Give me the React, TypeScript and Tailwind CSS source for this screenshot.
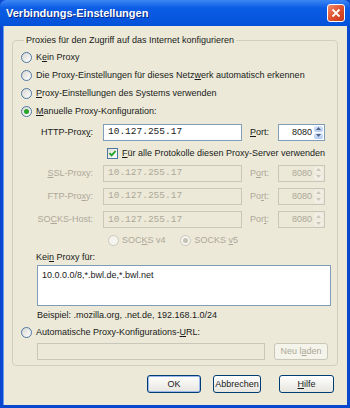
import type { ReactNode } from 'react'

const font = "font-['Liberation_Sans',Arial,sans-serif]"
const mono = "font-['Liberation_Mono','Courier_New',monospace]"

function U({ children }: { children: ReactNode }) {
  return <span className="underline underline-offset-[1px]">{children}</span>
}

function Radio({ checked, disabled }: { checked?: boolean; disabled?: boolean }) {
  return (
    <span
      className={`flex h-[11px] w-[11px] shrink-0 items-center justify-center rounded-full border ${
        disabled
          ? 'border-[#cac8bb] bg-[#f5f4ef]'
          : 'border-[#4d76a3] bg-gradient-to-br from-[#d8d7cf] to-white'
      }`}
    >
      {checked && (
        <span className={`h-[5px] w-[5px] rounded-full ${disabled ? 'bg-[#c4c2b6]' : 'bg-[#29a329]'}`} />
      )}
    </span>
  )
}

function Checkbox() {
  return (
    <span className="flex h-[11px] w-[11px] shrink-0 items-center justify-center border border-[#4d76a3] bg-gradient-to-br from-[#e0dfd8] to-white">
      <svg width="9" height="9" viewBox="0 0 9 9">
        <path d="M1.5 4.2 L3.6 6.4 L7.6 2" fill="none" stroke="#21a121" strokeWidth="1.8" />
      </svg>
    </span>
  )
}

function TextBox({ value, disabled, className }: { value: string; disabled?: boolean; className: string }) {
  return (
    <div
      className={`flex h-[17px] items-center border px-[4px] text-[9.5px] ${mono} ${
        disabled ? 'border-[#c9c7ba] bg-[#ece9d8] text-[#aca899]' : 'border-[#7f9db9] bg-white text-[#1a1a1a]'
      } ${className}`}
    >
      {value}
    </div>
  )
}

function Spin({ disabled }: { disabled?: boolean }) {
  const arrow = disabled ? '#c9c7ba' : '#4d6185'
  return (
    <div
      className={`flex h-[17px] w-[47px] items-center border ${
        disabled ? 'border-[#c9c7ba] bg-[#ece9d8] text-[#aca899]' : 'border-[#7f9db9] bg-white'
      }`}
    >
      <span className="flex-1 pr-[2px] text-right text-[9px]">8080</span>
      <div className="flex h-full w-[10px] flex-col gap-px py-px pr-px">
        {[0, 1].map((i) => (
          <span
            key={i}
            className={`flex flex-1 items-center justify-center rounded-[2px] ${
              disabled ? 'bg-[#f1efe6]' : 'bg-gradient-to-b from-[#d9e6fb] to-[#b3c9f0]'
            }`}
          >
            <svg width="5" height="3" viewBox="0 0 5 3">
              <path d={i === 0 ? 'M0 3 L2.5 0 L5 3 Z' : 'M0 0 L2.5 3 L5 0 Z'} fill={arrow} />
            </svg>
          </span>
        ))}
      </div>
    </div>
  )
}

function ProxyRow({
  label,
  port,
  h,
  disabled,
}: {
  label: ReactNode
  port: ReactNode
  h: string
  disabled?: boolean
}) {
  return (
    <div className={`flex items-center ${h} ${disabled ? 'text-[#aca899]' : ''}`}>
      <span className="w-[72px] text-right">{label}</span>
      <TextBox value="10.127.255.17" disabled={disabled} className="ml-[10px] w-[139px]" />
      <span className="ml-[8px] w-[28px]">{port}</span>
      <Spin disabled={disabled} />
    </div>
  )
}

function Button({ children, def, w }: { children: ReactNode; def?: boolean; w: string }) {
  return (
    <div
      className={`flex h-[18px] items-center justify-center rounded-[3px] border border-[#003c74] bg-gradient-to-b from-white to-[#e6e5de] ${w} ${
        def ? 'shadow-[inset_0_0_0_1px_#9db9eb]' : ''
      }`}
    >
      {children}
    </div>
  )
}

export default function App() {
  return (
    <div className={`flex h-[408px] w-[350px] flex-col bg-[#0a47cf] text-[9px] leading-none text-[#1a1a1a] ${font}`}>
      <div className="flex h-[26px] shrink-0 items-center rounded-t-[6px] bg-gradient-to-b from-[#3b86f4] via-[#0b5de6] via-30% to-[#0551d9] pl-[6px] pr-[5px]">
        <span className="flex-1 text-[11px] font-bold text-white [text-shadow:1px_1px_0_#0a2a8a]">
          Verbindungs-Einstellungen
        </span>
        <div className="flex h-[18px] w-[18px] items-center justify-center rounded-[3px] border border-white bg-gradient-to-br from-[#f08a6a] via-[#e0512e] to-[#c4371a]">
          <svg width="10" height="10" viewBox="0 0 10 10">
            <path d="M1.5 1.5 L8.5 8.5 M8.5 1.5 L1.5 8.5" stroke="white" strokeWidth="1.8" />
          </svg>
        </div>
      </div>

      <div className="mx-[3px] mb-[3px] flex flex-1 flex-col border-l border-[#6a9cf2] bg-[#ece9d8]">
        <fieldset className="ml-[8px] mr-[9px] mt-[7px] rounded-[4px] border border-[#d0d0bf] pb-[2px] pl-[8px]">
          <legend className="ml-[3px] px-[2px] leading-[14px]">
            Proxies für den Zugriff auf das Internet konfigurieren
          </legend>

          <div className="mt-px flex flex-col">
            <div className="flex h-[18px] items-center gap-[4px]">
              <Radio />
              <span>
                K<U>e</U>in Proxy
              </span>
            </div>
            <div className="flex h-[18px] items-center gap-[4px]">
              <Radio />
              <span>
                Die Proxy-Einstellungen für dieses Netz<U>w</U>erk automatisch erkennen
              </span>
            </div>
            <div className="flex h-[18px] items-center gap-[4px]">
              <Radio />
              <span>
                <U>P</U>roxy-Einstellungen des Systems verwenden
              </span>
            </div>
            <div className="flex h-[18px] items-center gap-[4px]">
              <Radio checked />
              <span>
                <U>M</U>anuelle Proxy-Konfiguration:
              </span>
            </div>

            <ProxyRow
              h="h-[24px]"
              label={
                <>
                  HTTP-Prox<U>y</U>:
                </>
              }
              port={
                <>
                  <U>P</U>ort:
                </>
              }
            />

            <div className="flex h-[18px] items-center gap-[4px] pl-[86px]">
              <Checkbox />
              <span>
                <U>F</U>ür alle Protokolle diesen Proxy-Server verwenden
              </span>
            </div>

            <ProxyRow
              h="h-[22px]"
              disabled
              label={
                <>
                  <U>S</U>SL-Proxy:
                </>
              }
              port={
                <>
                  P<U>o</U>rt:
                </>
              }
            />
            <ProxyRow
              h="h-[24px]"
              disabled
              label={
                <>
                  FTP-Pro<U>x</U>y:
                </>
              }
              port={
                <>
                  Po<U>r</U>t:
                </>
              }
            />
            <ProxyRow
              h="h-[23px]"
              disabled
              label={
                <>
                  SO<U>C</U>KS-Host:
                </>
              }
              port={
                <>
                  Por<U>t</U>:
                </>
              }
            />

            <div className="flex h-[18px] items-center pl-[87px] text-[#aca899]">
              <Radio disabled />
              <span className="ml-[3px]">
                SOC<U>K</U>S v4
              </span>
              <span className="ml-[14px]">
                <Radio checked disabled />
              </span>
              <span className="ml-[4px]">
                SOCKS <U>v</U>5
              </span>
            </div>

            <div className="flex h-[16px] items-center pl-[15px]">
              <span>
                Kei<U>n</U> Proxy für:
              </span>
            </div>
            <div className="ml-[16px] h-[41px] w-[294px] border border-[#7f9db9] bg-white px-[4px] pt-[5px]">
              10.0.0.0/8,*.bwl.de,*.bwl.net
            </div>
            <div className="flex h-[18px] items-center pl-[16px]">
              Beispiel: .mozilla.org, .net.de, 192.168.1.0/24
            </div>

            <div className="flex h-[16px] items-center gap-[4px]">
              <Radio />
              <span>
                Automatische Proxy-Konfigurations-<U>U</U>RL:
              </span>
            </div>
            <div className="flex h-[23px] items-center pl-[16px]">
              <TextBox value="" disabled className="w-[228px] border-[#b7b5a8]" />
              <div className="ml-[9px] flex h-[17px] w-[54px] items-center justify-center rounded-[3px] border border-[#c9c7ba] bg-[#f5f4ea] text-[#aca899]">
                Neu l<U>a</U>den
              </div>
            </div>
          </div>
        </fieldset>

        <div className="mt-[9px] flex justify-end pr-[13px]">
          <Button def w="w-[54px]">
            OK
          </Button>
          <div className="ml-[12px]">
            <Button w="w-[48px]">Abbrechen</Button>
          </div>
          <div className="ml-[18px]">
            <Button w="w-[55px]">
              <U>H</U>ilfe
            </Button>
          </div>
        </div>
      </div>
    </div>
  )
}
